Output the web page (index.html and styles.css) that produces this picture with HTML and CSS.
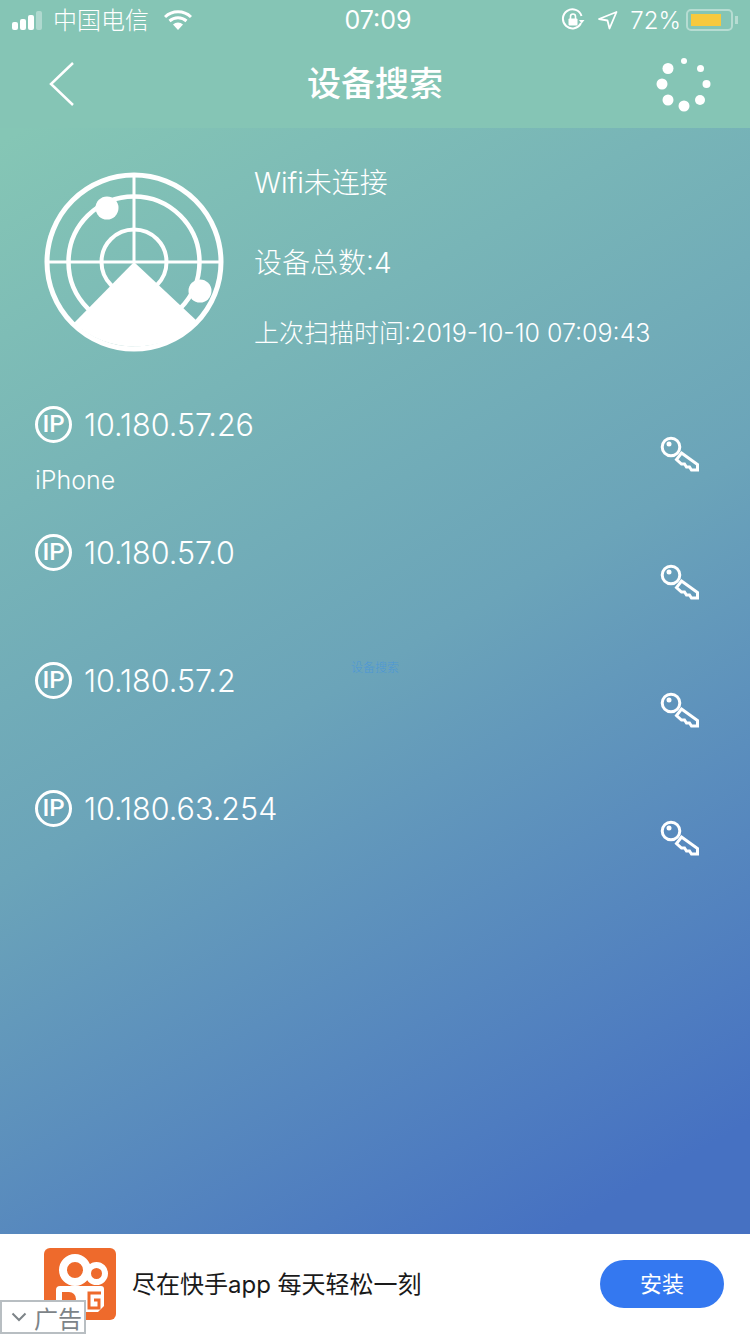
FILE: index.html
```html
<!DOCTYPE html>
<html lang="zh-CN">
<head>
<meta charset="UTF-8">
<meta name="viewport" content="width=device-width, initial-scale=1.0">
<title>设备搜索</title>
<link rel="stylesheet" href="styles.css">
</head>
<body>

<div class="page">
  <div class="header">
    <div class="status-bar">
      <div class="status-left">
        <div class="signal"><i></i><i></i><i></i><i class="off"></i></div>
        <span class="carrier">中国电信</span>
        <svg class="wifi" width="28" height="20" viewBox="0 0 28 20">
          <path d="M1 7 A19 19 0 0 1 27 7" fill="none" stroke="#fff" stroke-width="3"/>
          <path d="M5.5 11 A13 13 0 0 1 22.5 11" fill="none" stroke="#fff" stroke-width="3"/>
          <path d="M9 14.5 A7.5 7.5 0 0 1 19 14.5 L14 20 Z" fill="#fff"/>
        </svg>
      </div>
      <div class="clock">07:09</div>
      <div class="status-right">
        <svg width="24" height="24" viewBox="0 0 24 24">
          <path d="M20 15 A9.5 9.5 0 1 1 20.5 8" fill="none" stroke="#fff" stroke-width="2"/>
          <path d="M18 12 L23.5 12 L20.7 15.5 Z" fill="#fff"/>
          <rect x="7.5" y="10.5" width="9" height="7" rx="1" fill="#fff"/>
          <path d="M9.5 11 V8.5 A2.5 2.5 0 0 1 14.5 8.5 V11" fill="none" stroke="#fff" stroke-width="1.6"/>
        </svg>
        <svg class="arrow" width="20" height="20" viewBox="0 0 20 20">
          <path d="M1 9 L18.5 2 L11.5 18.5 L9.5 10.5 Z" fill="none" stroke="#fff" stroke-width="1.8" stroke-linejoin="round"/>
        </svg>
        <span class="percent">72%</span>
        <div class="battery"><div class="battery-level"></div></div>
        <div class="battery-tip"></div>
      </div>
    </div>
    <div class="nav-bar">
      <svg class="back" width="26" height="46" viewBox="0 0 26 46">
        <path d="M24 2 L2 23 L24 44" fill="none" stroke="#fff" stroke-width="2.5"/>
      </svg>
      <h1>设备搜索</h1>
      <svg class="spinner" width="56" height="56" viewBox="0 0 56 56">
        <circle cx="28" cy="50" r="5.5"/>
        <circle cx="44" cy="44" r="5"/>
        <circle cx="50.5" cy="28" r="4"/>
        <circle cx="44.5" cy="12.5" r="3.5"/>
        <circle cx="28" cy="5" r="3"/>
        <circle cx="12" cy="12.5" r="5.5"/>
        <circle cx="6" cy="28" r="5.5"/>
        <circle cx="12" cy="44" r="5.5"/>
      </svg>
    </div>
  </div>

  <div class="main">
    <div class="summary">
      <svg class="radar" width="182" height="182" viewBox="0 0 182 182">
        <g fill="none" stroke="#fff">
          <circle cx="91" cy="91" r="87" stroke-width="5"/>
          <circle cx="91" cy="91" r="65.5" stroke-width="4.5"/>
          <circle cx="91" cy="91" r="32.5" stroke-width="4"/>
          <path d="M91 3 V91 M3 91 H179" stroke-width="3"/>
        </g>
        <path d="M91 91 L31 152 A89 89 0 0 0 154 150 Z" fill="#fff"/>
        <circle cx="64" cy="37" r="11.5" fill="#fff"/>
        <circle cx="157" cy="120" r="11.5" fill="#fff"/>
      </svg>
      <div class="summary-text">
        <div class="wifi-state">Wifi未连接</div>
        <div class="device-count">设备总数:4</div>
        <div class="scan-time">上次扫描时间:2019-10-10 07:09:43</div>
      </div>
    </div>

    <div class="device-list" id="deviceList"></div>
    <div class="toast">设备搜索</div>
  </div>

  <div class="ad">
    <div class="ad-logo">
      <svg width="72" height="72" viewBox="0 0 72 72">
        <circle cx="31" cy="22" r="12" fill="none" stroke="#fff" stroke-width="8"/>
        <circle cx="52.5" cy="25.5" r="8.5" fill="none" stroke="#fff" stroke-width="6"/>
        <path d="M16 38 H57 A3 3 0 0 1 60 41 V58 L54 64 H16 A4 4 0 0 1 12 60 V42 A4 4 0 0 1 16 38 Z" fill="#fff"/>
        <path d="M18 44 H25 A7 7 0 0 1 25 58 H18 Z" fill="#ee6a2c"/>
        <path d="M57 45 H45 V60 H55 V52 H50" fill="none" stroke="#ee6a2c" stroke-width="3"/>
      </svg>
    </div>
    <div class="ad-text">尽在快手app 每天轻松一刻</div>
    <button class="install-btn">安装</button>
    <div class="ad-tag">
      <svg width="16" height="10" viewBox="0 0 16 10">
        <path d="M1.5 1.5 L8 8 L14.5 1.5" fill="none" stroke="#7d8488" stroke-width="2"/>
      </svg>
      <span>广告</span>
    </div>
  </div>
</div>

<script>
const devices = [
  { ip: "10.180.57.26", name: "iPhone" },
  { ip: "10.180.57.0", name: "" },
  { ip: "10.180.57.2", name: "" },
  { ip: "10.180.63.254", name: "" }
];

const keyIcon = `
  <svg class="key" width="40" height="36" viewBox="0 0 40 36">
    <circle cx="11" cy="11" r="8.8" fill="none" stroke="#fff" stroke-width="3"/>
    <circle cx="9" cy="8" r="2.5" fill="#fff"/>
    <path d="M21.5 17 L37.5 28.5 V34 H31.5 L29.5 31 H26.5 L24.5 28 H21.5 L16.5 23.5 Z" fill="none" stroke="#fff" stroke-width="3" stroke-linejoin="miter"/>
  </svg>`;

function createDeviceList() {
  const list = document.getElementById('deviceList');
  devices.forEach(device => {
    const row = document.createElement('div');
    row.className = 'device-row';
    row.innerHTML = `
      <div class="device-info">
        <div class="device-ip">
          <span class="ip-badge">IP</span>
          <span>${device.ip}</span>
        </div>
        <div class="device-name">${device.name}</div>
      </div>
      ${keyIcon}
    `;
    list.appendChild(row);
  });
}

createDeviceList();
</script>
</body>
</html>
```

FILE: styles.css
```css
* {
  margin: 0;
  padding: 0;
  box-sizing: border-box;
}

body {
  margin: 0;
  width: 750px;
  height: 1334px;
  overflow: hidden;
  color: #fff;
  font-family: 'Inter', 'Noto Sans CJK SC', sans-serif;
  font-weight: 300;
}

.page {
  height: 1334px;
  display: flex;
  flex-direction: column;
  background: linear-gradient(150deg, #85c6b5 8%, #6ba4b9 50%, #4671c2 88%);
}

.header {
  height: 128px;
  background: #85c5b5;
}

.status-bar {
  height: 40px;
  padding: 0 12px;
  display: flex;
  align-items: center;
  justify-content: space-between;
  position: relative;
}

.status-left,
.status-right {
  display: flex;
  align-items: center;
}

.signal {
  display: flex;
  align-items: flex-end;
  gap: 2px;
  height: 20px;
}

.signal i {
  display: block;
  width: 6px;
  border-radius: 2px;
  background: #fff;
}

.signal i:nth-child(1) { height: 8px; }
.signal i:nth-child(2) { height: 11px; }
.signal i:nth-child(3) { height: 15px; }
.signal i:nth-child(4) { height: 19px; }

.signal i.off {
  background: rgba(255, 255, 255, 0.35);
}

.carrier {
  margin: -4px 0 0 11px;
  font-size: 24px;
  font-family: 'Noto Sans CJK SC', sans-serif;
  font-weight: 300;
}

.wifi {
  margin-left: 15px;
}

.clock {
  position: absolute;
  left: 6px;
  right: 0;
  text-align: center;
  font-size: 25px;
  font-weight: 400;
}

.arrow {
  margin-left: 13px;
}

.percent {
  margin-left: 12px;
  font-size: 24px;
}

.battery {
  width: 47px;
  height: 22px;
  margin-left: 5px;
  padding: 3px;
  border: 2px solid rgba(255, 255, 255, 0.4);
  border-radius: 5px;
}

.battery-level {
  width: 30px;
  height: 100%;
  background: #f7c93e;
}

.battery-tip {
  width: 3px;
  height: 8px;
  margin-left: 2px;
  background: rgba(255, 255, 255, 0.4);
}

.nav-bar {
  height: 88px;
  padding: 0 38px 0 49px;
  display: flex;
  align-items: center;
  justify-content: space-between;
  position: relative;
}

.nav-bar h1 {
  position: absolute;
  left: 0;
  right: 0;
  top: 17px;
  text-align: center;
  font-family: 'Noto Sans CJK SC', sans-serif;
  font-size: 34px;
  font-weight: 500;
}

.spinner {
  fill: #fff;
}

.main {
  flex: 1;
  position: relative;
}

.summary {
  height: 264px;
  padding: 43px 0 0 43px;
  display: flex;
}

.radar {
  flex: none;
}

.summary-text {
  margin-left: 29px;
  margin-top: -16px;
}

.wifi-state,
.device-count {
  height: 80px;
  line-height: 56px;
  font-size: 28px;
}

.scan-time {
  margin-top: -2px;
  line-height: 40px;
  font-size: 25px;
}

.device-list {
  padding: 0 50px 0 35px;
}

.device-row {
  height: 128px;
  display: flex;
  justify-content: space-between;
}

.device-ip {
  height: 64px;
  display: flex;
  align-items: center;
  gap: 12px;
  font-size: 30.5px;
}

.ip-badge {
  width: 37px;
  height: 37px;
  border: 3px solid #fff;
  border-radius: 50%;
  display: flex;
  align-items: center;
  justify-content: center;
  font-family: 'Roboto', sans-serif;
  font-size: 24px;
  font-weight: 500;
}

.device-name {
  margin-top: 8px;
  line-height: 32px;
  font-size: 25px;
}

.key {
  margin-top: 44px;
}

.toast {
  position: absolute;
  left: 0;
  right: 0;
  top: 530px;
  text-align: center;
  font-family: 'Noto Sans CJK SC', sans-serif;
  font-size: 12px;
  color: #4c97d6;
}

.ad {
  height: 100px;
  background: #fff;
  display: flex;
  align-items: center;
  padding: 0 26px 0 44px;
  position: relative;
}

.ad-logo {
  width: 72px;
  height: 72px;
  border-radius: 6px;
  background: #ee6a2c;
  overflow: hidden;
}

.ad-text {
  margin-left: 16px;
  padding-bottom: 4px;
  flex: 1;
  color: #1a1a1a;
  font-family: 'Inter', 'Noto Sans CJK SC', sans-serif;
  font-size: 24px;
  font-weight: 400;
}

.install-btn {
  width: 124px;
  height: 48px;
  padding-bottom: 5px;
  border: none;
  border-radius: 24px;
  background: #3478f0;
  color: #fff;
  font-family: 'Noto Sans CJK SC', sans-serif;
  font-size: 22px;
}

.ad-tag {
  position: absolute;
  left: 0;
  bottom: 0;
  width: 86px;
  height: 34px;
  background: #fff;
  border: 2px solid #b8bec2;
  display: flex;
  align-items: center;
  gap: 7px;
  padding-left: 9px;
  color: #7d8488;
  font-family: 'Noto Sans CJK SC', sans-serif;
  font-size: 24px;
  font-weight: 400;
}
```
